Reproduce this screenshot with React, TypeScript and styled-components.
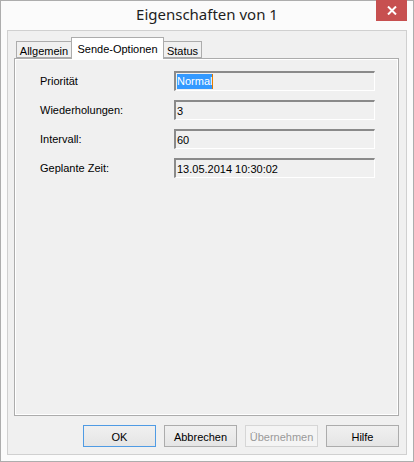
import React from 'react';
import styled, { createGlobalStyle } from 'styled-components';

const GlobalStyle = createGlobalStyle`
  html, body {
    margin: 0;
    padding: 0;
    background: #ffffff;
  }
`;

const Window = styled.div`
  box-sizing: border-box;
  width: 414px;
  height: 462px;
  border: 1px solid #adadad;
  background: #fbfbfb;
  display: flex;
  flex-direction: column;
  font-family: 'Liberation Sans', Arial, sans-serif;
  font-size: 11px;
  color: #000;
`;

const TitleBar = styled.div`
  position: relative;
  height: 29px;
  flex: none;
  display: flex;
  align-items: center;
  justify-content: center;
`;

const Title = styled.span`
  font-family: 'Noto Sans', 'Open Sans', sans-serif;
  font-size: 15px;
  color: #1e1e1e;
  margin-top: -3px;
`;

const CloseButton = styled.div`
  position: absolute;
  top: -1px;
  right: 6px;
  width: 31px;
  height: 21px;
  background: #c75050;
  display: flex;
  align-items: center;
  justify-content: center;
`;

const Client = styled.div`
  box-sizing: border-box;
  flex: 1;
  margin: 0 6px 6px 6px;
  border: 1px solid #d0d0d0;
  background: #f0f0f0;
  padding: 6px 7px 7px 6px;
  display: flex;
  flex-direction: column;
`;

const TabStrip = styled.div`
  height: 21px;
  display: flex;
  align-items: flex-end;
  padding-left: 2px;
  position: relative;
  z-index: 1;
`;

const Tab = styled.div<{ $active?: boolean; $w: number }>`
  box-sizing: border-box;
  width: ${(p) => p.$w}px;
  height: ${(p) => (p.$active ? 22 : 17)}px;
  margin-bottom: ${(p) => (p.$active ? -1 : 0)}px;
  margin-right: -1px;
  border: 1px solid #acacac;
  border-bottom: ${(p) => (p.$active ? 'none' : '1px solid #acacac')};
  background: ${(p) => (p.$active ? '#ffffff' : '#f0f0f0')};
  display: flex;
  align-items: center;
  justify-content: center;
  padding-top: ${(p) => (p.$active ? 0 : 2)}px;
  position: relative;
  z-index: ${(p) => (p.$active ? 2 : 1)};
  white-space: nowrap;
`;

const Panel = styled.div`
  box-sizing: border-box;
  height: 358px;
  border: 1px solid #acacac;
  box-shadow: inset 1px 1px 0 #ffffff, inset -1px -1px 0 #ffffff;
  background: #f0f0f0;
  padding: 12px 0 0 25px;
  display: grid;
  grid-template-columns: 134px 201px;
  grid-auto-rows: 20px;
  row-gap: 9px;
  align-content: start;
  align-items: center;
`;

const Label = styled.span`
  white-space: nowrap;
`;

const Field = styled.div`
  box-sizing: border-box;
  height: 20px;
  border-style: solid;
  border-width: 2px 1px 1px 2px;
  border-color: #8a8a8a #ffffff #ffffff #8a8a8a;
  box-shadow: 0 0 0 0;
  background: #f0f0f0;
  padding-left: 1px;
  display: flex;
  align-items: center;
  white-space: nowrap;
`;

const Selected = styled.span`
  background: #3399ff;
  color: #ffffff;
  padding: 1px 0 2px;
  border-right: 1px solid #e07b00;
`;

const ButtonRow = styled.div`
  margin-top: 9px;
  display: flex;
  justify-content: flex-end;
  gap: 8px;
`;

const Button = styled.div<{ $default?: boolean; $disabled?: boolean }>`
  box-sizing: border-box;
  width: 73px;
  height: 22px;
  border: 1px solid
    ${(p) => (p.$default ? '#4f9be4' : p.$disabled ? '#d6d6d6' : '#acacac')};
  background: ${(p) =>
    p.$disabled ? '#f4f4f4' : 'linear-gradient(#f0f0f0, #e5e5e5)'};
  color: ${(p) => (p.$disabled ? '#9a9a9a' : '#000')};
  display: flex;
  align-items: center;
  justify-content: center;
  padding-top: 1px;
`;

const fields = [
  { label: 'Priorität', value: 'Normal', selected: true },
  { label: 'Wiederholungen:', value: '3' },
  { label: 'Intervall:', value: '60' },
  { label: 'Geplante Zeit:', value: '13.05.2014 10:30:02' },
];

const App = () => {
  return (
    <>
      <GlobalStyle />
      <Window>
        <TitleBar>
          <Title>Eigenschaften von 1</Title>
          <CloseButton>
            <svg width="10" height="9" viewBox="0 0 10 9">
              <path
                d="M1 0.5 L9 8.5 M9 0.5 L1 8.5"
                stroke="#ffffff"
                strokeWidth="2"
              />
            </svg>
          </CloseButton>
        </TitleBar>
        <Client>
          <TabStrip>
            <Tab $w={56}>Allgemein</Tab>
            <Tab $w={93} $active>
              Sende-Optionen
            </Tab>
            <Tab $w={39}>Status</Tab>
          </TabStrip>
          <Panel>
            {fields.map((f) => (
              <React.Fragment key={f.label}>
                <Label>{f.label}</Label>
                <Field>
                  {f.selected ? <Selected>{f.value}</Selected> : f.value}
                </Field>
              </React.Fragment>
            ))}
          </Panel>
          <ButtonRow>
            <Button $default>OK</Button>
            <Button>Abbrechen</Button>
            <Button $disabled>Übernehmen</Button>
            <Button>Hilfe</Button>
          </ButtonRow>
        </Client>
      </Window>
    </>
  );
};

export default App;
